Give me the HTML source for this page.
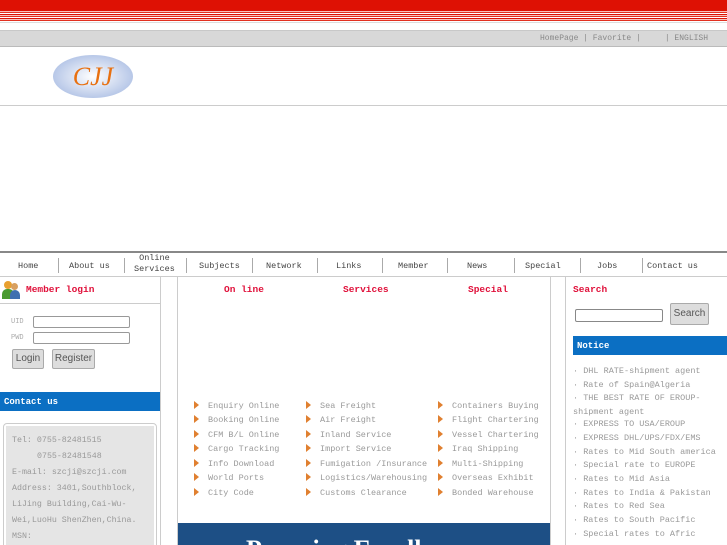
<!DOCTYPE html><html><head><style>
*{margin:0;padding:0;box-sizing:border-box}
html,body{width:727px;height:545px;overflow:hidden}
body{background:#fff;font-family:"Liberation Mono",monospace;font-size:8.5px;color:#888;position:relative}
.a{position:absolute}
.nav span{position:absolute;top:8px;font-size:8.5px;color:#444;text-align:center;white-space:nowrap}
.sep{position:absolute;top:5px;width:1px;height:15px;background:#aaa}
.h{color:#e0103a;font-weight:bold;font-size:9.5px}
.it{position:absolute;font-size:8.5px;color:#999;white-space:nowrap}
.it:before{content:"";display:inline-block;width:0;height:0;border-left:5px solid #e08030;border-top:4px solid transparent;border-bottom:4px solid transparent;margin-right:9px;vertical-align:-1px}
.nl{position:absolute;left:573px;font-size:8.5px;color:#999;white-space:nowrap;line-height:13.7px}
.ct{position:absolute;left:12px;color:#999;font-size:8.3px;white-space:nowrap}
</style></head><body>
<div class="a" style="top:0;left:0;width:727px;height:10px;background:#de1104"></div>
<div class="a" style="top:10px;left:0;width:727px;height:12px;background:repeating-linear-gradient(#de1104 0 1px,#f7c0b8 1px 2px,#e23020 2px 3px,#fff 3px 4px)"></div>
<div class="a" style="top:22px;left:0;width:727px;height:1px;background:#ddd"></div>
<div class="a" style="top:30px;left:0;width:727px;height:17px;background:#d8d8d8;border-top:1px solid #c8c8c8;border-bottom:1px solid #bbb"></div>
<div class="a" style="top:34px;left:540px;color:#888;font-size:8px">HomePage | Favorite |&nbsp;&nbsp;&nbsp;&nbsp; | ENGLISH</div>
<div class="a" style="top:55px;left:53px;width:80px;height:43px;border-radius:50%;background:radial-gradient(#fff,#b8c8e8 70%,#8aa0d0);color:#e87010;font-family:'Liberation Serif',serif;font-style:italic;font-size:26px;text-align:center;line-height:43px">CJJ</div>
<div class="a" style="top:105px;left:0;width:727px;height:1px;background:#ccc"></div>
<div class="a" style="top:251px;left:0;width:727px;height:2px;background:#888"></div>
<div class="a nav" style="top:253px;left:0;width:727px;height:24px;border-bottom:1px solid #ccc">
<span style="left:18px">Home</span><div class="sep" style="left:58px"></div>
<span style="left:69px">About us</span><div class="sep" style="left:124px"></div>
<span style="left:134px;top:0;line-height:11px">Online<br>Services</span><div class="sep" style="left:186px"></div>
<span style="left:199px">Subjects</span><div class="sep" style="left:252px"></div>
<span style="left:266px">Network</span><div class="sep" style="left:317px"></div>
<span style="left:336px">Links</span><div class="sep" style="left:382px"></div>
<span style="left:398px">Member</span><div class="sep" style="left:447px"></div>
<span style="left:467px">News</span><div class="sep" style="left:514px"></div>
<span style="left:525px">Special</span><div class="sep" style="left:580px"></div>
<span style="left:597px">Jobs</span><div class="sep" style="left:642px"></div>
<span style="left:647px">Contact us</span></div>
<div class="a" style="top:277px;left:160px;width:1px;height:268px;background:#ccc"></div>
<div class="a" style="top:277px;left:177px;width:1px;height:268px;background:#ccc"></div>
<div class="a" style="top:277px;left:550px;width:1px;height:268px;background:#ccc"></div>
<div class="a" style="top:277px;left:565px;width:1px;height:268px;background:#ccc"></div>
<div class="a" style="top:281px;left:2px;width:20px;height:19px"><div class="a" style="left:2px;top:0;width:8px;height:8px;border-radius:50%;background:#e8a030"></div><div class="a" style="left:0;top:8px;width:12px;height:10px;border-radius:5px 5px 0 0;background:#4a9a30"></div><div class="a" style="left:9px;top:2px;width:7px;height:7px;border-radius:50%;background:#d8a060"></div><div class="a" style="left:8px;top:9px;width:10px;height:9px;border-radius:5px 5px 0 0;background:#4070b0"></div></div>
<div class="a h" style="top:284px;left:26px">Member login</div>
<div class="a" style="top:303px;left:0;width:160px;height:1px;background:#ccc"></div>
<div class="a" style="top:318px;left:11px;font-size:7px;color:#aaa">UID</div>
<div class="a" style="top:316px;left:33px;width:97px;height:12px;border:1px solid #999;border-radius:2px"></div>
<div class="a" style="top:334px;left:11px;font-size:7px;color:#aaa">PWD</div>
<div class="a" style="top:332px;left:33px;width:97px;height:12px;border:1px solid #999;border-radius:2px"></div>
<div class="a" style="top:349px;left:12px;width:32px;height:20px;border:1px solid #aaa;background:#ddd;border-radius:2px;font-family:'Liberation Sans',sans-serif;font-size:10px;color:#555;text-align:center;line-height:18px">Login</div>
<div class="a" style="top:349px;left:52px;width:43px;height:20px;border:1px solid #aaa;background:#ddd;border-radius:2px;font-family:'Liberation Sans',sans-serif;font-size:10px;color:#555;text-align:center;line-height:18px">Register</div>
<div class="a" style="top:392px;left:0;width:160px;height:19px;background:#0b6fc3;color:#fff;font-weight:bold;font-size:9px;padding:5px 4px">Contact us</div>
<div class="a" style="top:423px;left:3px;width:154px;height:130px;border:1px solid #ccc;border-radius:4px;background:#fff"></div>
<div class="a" style="top:426px;left:6px;width:148px;height:130px;background:#e5e5e5"></div>
<div class="ct" style="top:436px">Tel: 0755-82481515</div>
<div class="ct" style="top:452px;left:37px">0755-82481548</div>
<div class="ct" style="top:468px">E-mail: szcji@szcji.com</div>
<div class="ct" style="top:484px">Address: 3401,Southblock,</div>
<div class="ct" style="top:500px">LiJing Building,Cai-Wu-</div>
<div class="ct" style="top:516px">Wei,LuoHu ShenZhen,China.</div>
<div class="ct" style="top:532px">MSN:</div>
<div class="a h" style="top:284px;left:224px">On line</div>
<div class="a h" style="top:284px;left:343px">Services</div>
<div class="a h" style="top:284px;left:468px">Special</div>
<div class="it" style="left:194px;top:401px">Enquiry Online</div><div class="it" style="left:194px;top:415px">Booking Online</div><div class="it" style="left:194px;top:430px">CFM B/L Online</div><div class="it" style="left:194px;top:444px">Cargo Tracking</div><div class="it" style="left:194px;top:459px">Info Download</div><div class="it" style="left:194px;top:473px">World Ports</div><div class="it" style="left:194px;top:488px">City Code</div>
<div class="it" style="left:306px;top:401px">Sea Freight</div><div class="it" style="left:306px;top:415px">Air Freight</div><div class="it" style="left:306px;top:430px">Inland Service</div><div class="it" style="left:306px;top:444px">Import Service</div><div class="it" style="left:306px;top:459px">Fumigation /Insurance</div><div class="it" style="left:306px;top:473px">Logistics/Warehousing</div><div class="it" style="left:306px;top:488px">Customs Clearance</div>
<div class="it" style="left:438px;top:401px">Containers Buying</div><div class="it" style="left:438px;top:415px">Flight Chartering</div><div class="it" style="left:438px;top:430px">Vessel Chartering</div><div class="it" style="left:438px;top:444px">Iraq Shipping</div><div class="it" style="left:438px;top:459px">Multi-Shipping</div><div class="it" style="left:438px;top:473px">Overseas Exhibit</div><div class="it" style="left:438px;top:488px">Bonded Warehouse</div>
<div class="a" style="top:523px;left:178px;width:372px;height:22px;background:#1d4f85;overflow:hidden"><div style="color:#fff;font-family:'Liberation Serif',serif;font-weight:bold;font-size:26px;margin:12px 0 0 68px;white-space:nowrap">Pursuing Excellence</div></div>
<div class="a h" style="top:284px;left:573px">Search</div>
<div class="a" style="top:309px;left:575px;width:88px;height:13px;border:1px solid #888;border-radius:2px"></div>
<div class="a" style="top:303px;left:670px;width:39px;height:22px;border:1px solid #aaa;background:#ddd;border-radius:2px;font-family:'Liberation Sans',sans-serif;font-size:10px;color:#555;text-align:center;line-height:20px">Search</div>
<div class="a" style="top:336px;left:573px;width:154px;height:19px;background:#0b6fc3;color:#fff;font-weight:bold;font-size:9px;padding:5px 4px">Notice</div>
<div class="nl" style="top:365px">· DHL RATE-shipment agent</div>
<div class="nl" style="top:379px">· Rate of Spain@Algeria</div>
<div class="nl" style="top:392px">· THE BEST RATE OF EROUP-<br>shipment agent</div>
<div class="nl" style="top:418px">· EXPRESS TO USA/EROUP</div>
<div class="nl" style="top:432px">· EXPRESS DHL/UPS/FDX/EMS</div>
<div class="nl" style="top:446px">· Rates to Mid South america</div>
<div class="nl" style="top:459px">· Special rate to EUROPE</div>
<div class="nl" style="top:473px">· Rates to Mid Asia</div>
<div class="nl" style="top:487px">· Rates to India &amp; Pakistan</div>
<div class="nl" style="top:500px">· Rates to Red Sea</div>
<div class="nl" style="top:514px">· Rates to South Pacific</div>
<div class="nl" style="top:528px">· Special rates to Afric</div>
</body></html>
